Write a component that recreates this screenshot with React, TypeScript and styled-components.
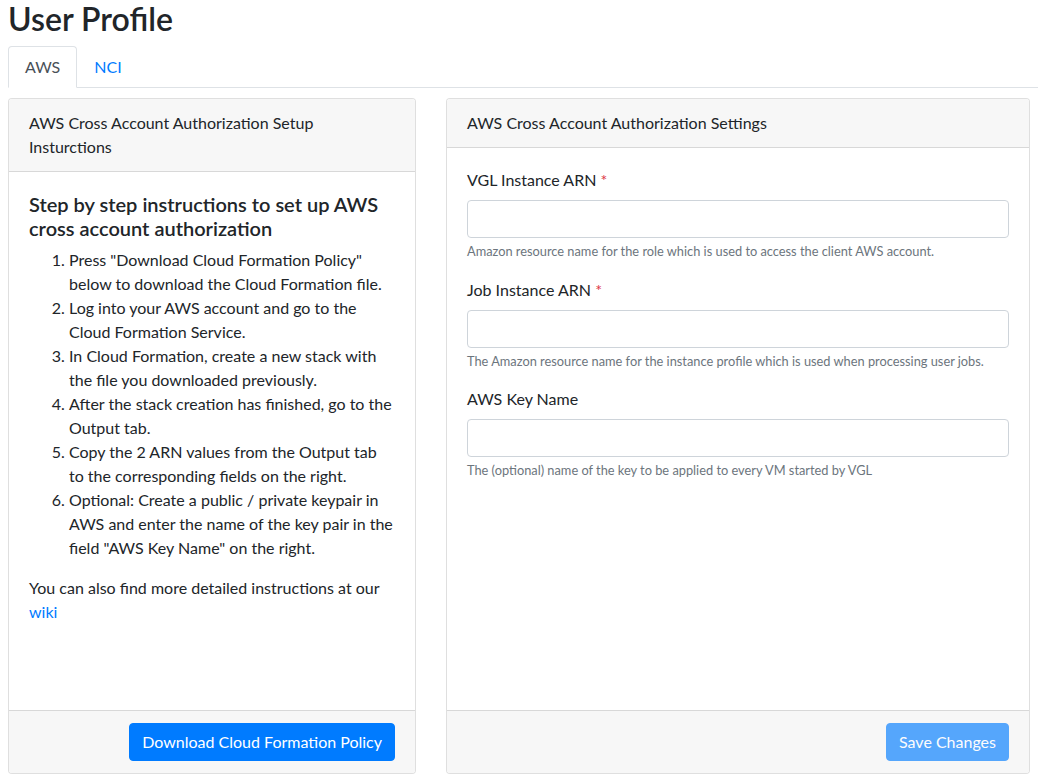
import React from "react";
import styled, { createGlobalStyle } from "styled-components";

const Global = createGlobalStyle`
  html, body { margin: 0; padding: 0; background: #fff; }
  body {
    font-family: "Segoe UI", Lato, "Liberation Sans", sans-serif;
    font-size: 16px;
    line-height: 1.5;
    color: #212529;
  }
  * { box-sizing: border-box; }
`;

const Page = styled.div`
  padding: 0 0 8px 8px;
`;

const Title = styled.h2`
  font-size: 32px;
  font-weight: 600;
  line-height: 1.2;
  margin: 0 0 8px 0;
`;

const Tabs = styled.nav`
  display: flex;
  border-bottom: 1px solid #dee2e6;
`;

const Tab = styled.a<{ $active?: boolean }>`
  display: block;
  padding: 8px 16px;
  margin-bottom: -1px;
  border-width: 1px;
  border-style: solid;
  border-color: ${(p) => (p.$active ? "#dee2e6 #dee2e6 #fff" : "transparent")};
  border-top-left-radius: 4px;
  border-top-right-radius: 4px;
  color: ${(p) => (p.$active ? "#495057" : "#007bff")};
  background: ${(p) => (p.$active ? "#fff" : "transparent")};
  text-decoration: none;
  cursor: pointer;
`;

const Columns = styled.div`
  display: grid;
  grid-template-columns: 408px 584px;
  column-gap: 30px;
  margin-top: 10px;
`;

const Card = styled.section`
  display: flex;
  flex-direction: column;
  height: 676px;
  border: 1px solid rgba(0, 0, 0, 0.125);
  border-radius: 4px;
  background: #fff;
  overflow: hidden;
`;

const CardHeader = styled.div`
  padding: 12px 20px;
  background: #f7f7f7;
  border-bottom: 1px solid rgba(0, 0, 0, 0.125);
`;

const CardBody = styled.div`
  flex: 1;
  padding: 20px;
`;

const CardFooter = styled.div`
  display: flex;
  justify-content: flex-end;
  padding: 12px 20px;
  background: #f7f7f7;
  border-top: 1px solid rgba(0, 0, 0, 0.125);
`;

const StepHeading = styled.h5`
  font-size: 20px;
  font-weight: 600;
  line-height: 1.2;
  margin: 0 0 8px 0;
`;

const Steps = styled.ol`
  margin: 0 0 16px 0;
  padding-left: 40px;
`;

const Para = styled.p`
  margin: 0;
`;

const Link = styled.a`
  color: #007bff;
  text-decoration: none;
`;

const FormGroup = styled.div`
  margin-bottom: 16px;
`;

const Label = styled.label`
  display: inline-block;
  margin-bottom: 8px;
`;

const Required = styled.span`
  color: #dc3545;
`;

const Input = styled.input`
  display: block;
  width: 100%;
  height: 38px;
  padding: 6px 12px;
  font: inherit;
  color: #495057;
  background: #fff;
  border: 1px solid #ced4da;
  border-radius: 4px;
`;

const Help = styled.small`
  display: block;
  margin-top: 4px;
  font-size: 12.8px;
  color: #6c757d;
`;

const Button = styled.button<{ $disabled?: boolean }>`
  display: inline-block;
  height: 38px;
  padding: 6px 12px;
  font: inherit;
  color: #fff;
  background: #007bff;
  border: 1px solid #007bff;
  border-radius: 4px;
  opacity: ${(p) => (p.$disabled ? 0.65 : 1)};
  cursor: ${(p) => (p.$disabled ? "default" : "pointer")};
`;

const steps = [
  'Press "Download Cloud Formation Policy" below to download the Cloud Formation file.',
  "Log into your AWS account and go to the Cloud Formation Service.",
  "In Cloud Formation, create a new stack with the file you downloaded previously.",
  "After the stack creation has finished, go to the Output tab.",
  "Copy the 2 ARN values from the Output tab to the corresponding fields on the right.",
  'Optional: Create a public / private keypair in AWS and enter the name of the key pair in the field "AWS Key Name" on the right.',
];

const fields = [
  {
    label: "VGL Instance ARN",
    required: true,
    help: "Amazon resource name for the role which is used to access the client AWS account.",
  },
  {
    label: "Job Instance ARN",
    required: true,
    help: "The Amazon resource name for the instance profile which is used when processing user jobs.",
  },
  {
    label: "AWS Key Name",
    required: false,
    help: "The (optional) name of the key to be applied to every VM started by VGL",
  },
];

export default function App() {
  return (
    <>
      <Global />
      <Page>
        <Title>User Profile</Title>
        <Tabs>
          <Tab $active>AWS</Tab>
          <Tab>NCI</Tab>
        </Tabs>
        <Columns>
          <Card>
            <CardHeader>AWS Cross Account Authorization Setup Insturctions</CardHeader>
            <CardBody>
              <StepHeading>Step by step instructions to set up AWS cross account authorization</StepHeading>
              <Steps>
                {steps.map((s) => (
                  <li key={s}>{s}</li>
                ))}
              </Steps>
              <Para>
                You can also find more detailed instructions at our <Link href="#">wiki</Link>
              </Para>
            </CardBody>
            <CardFooter>
              <Button>Download Cloud Formation Policy</Button>
            </CardFooter>
          </Card>
          <Card>
            <CardHeader>AWS Cross Account Authorization Settings</CardHeader>
            <CardBody>
              {fields.map((f) => (
                <FormGroup key={f.label}>
                  <Label>
                    {f.label} {f.required && <Required>*</Required>}
                  </Label>
                  <Input type="text" />
                  <Help>{f.help}</Help>
                </FormGroup>
              ))}
            </CardBody>
            <CardFooter>
              <Button $disabled>Save Changes</Button>
            </CardFooter>
          </Card>
        </Columns>
      </Page>
    </>
  );
}
